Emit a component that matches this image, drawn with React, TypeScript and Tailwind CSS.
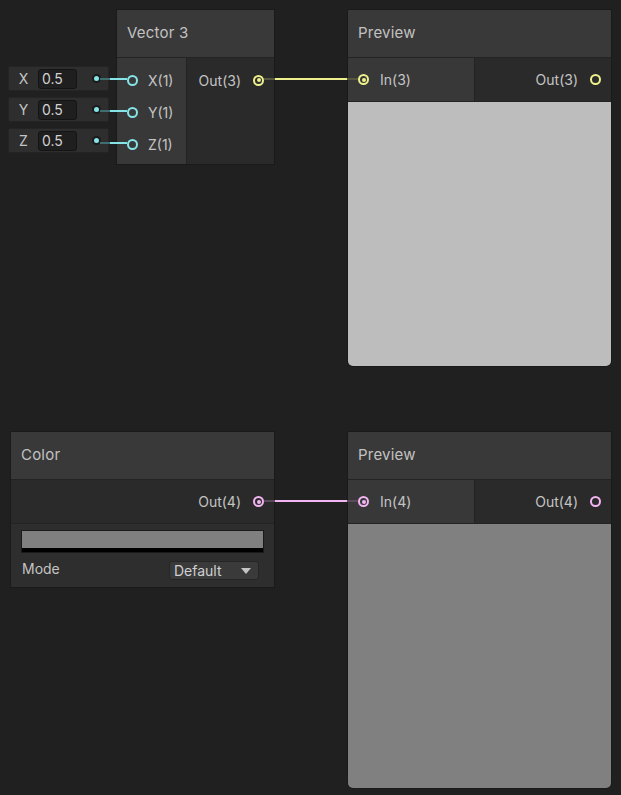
import React from 'react';

// ─── Ports ─────────────────────────────────────────────────
type PortProps = { color: string; connected?: boolean };

function Port({ color, connected }: PortProps) {
  return (
    <div
      className="w-[11px] h-[11px] rounded-full border-2 flex items-center justify-center shrink-0"
      style={{ borderColor: color }}
    >
      {connected && <div className="w-[4px] h-[4px] rounded-full" style={{ background: color }} />}
    </div>
  );
}

const YELLOW = '#edf08c';
const CYAN = '#84e4e7';
const PINK = '#f2b4f2';

function Header({ title }: { title: string }) {
  return (
    <div className="h-[48px] flex items-center px-[10px] bg-[#393939] border-b border-[#232323] text-[15px] text-[#c2c2c2] tracking-[0.2px]">
      {title}
    </div>
  );
}

// ─── Inline value field ───────────────────────────────────
function InlineField({ label }: { label: string }) {
  return (
    <div className="h-[25px] w-[101px] flex items-center bg-[#2e2e2e] border border-[#242424] rounded-[2px]">
      <span className="w-[29px] text-center text-[14px] text-[#c4c4c4]">{label}</span>
      <div className="w-[39px] h-[20px] bg-[#1f1f1f] border border-[#141414] rounded-[3px] flex items-center px-[3px] text-[14px] text-[#d2d2d2]">
        0.5
      </div>
      <div className="ml-[15px] w-[9px] h-[9px] rounded-full bg-[#1b1b1b] flex items-center justify-center">
        <div className="w-[5px] h-[5px] rounded-full bg-[#84e4e7]" />
      </div>
    </div>
  );
}

function PreviewNode({ n, swatch }: { n: number; swatch: string }) {
  const color = n === 3 ? YELLOW : PINK;
  return (
    <div className="w-[265px] flex flex-col rounded-b-[6px] rounded-t-[2px] border border-[#1a1a1a] bg-[#2a2a2a] overflow-hidden">
      <Header title="Preview" />
      <div className="h-[44px] flex border-b border-[#232323]">
        <div className="w-[127px] bg-[#383838] flex items-center pl-[10px] gap-[11px] border-r border-[#232323]">
          <Port color={color} connected />
          <span className="text-[14px] text-[#c4c4c4]">In({n})</span>
        </div>
        <div className="flex-1 bg-[#2a2a2a] flex items-center justify-end pr-[10px] gap-[12px]">
          <span className="text-[14px] text-[#c4c4c4]">Out({n})</span>
          <Port color={color} />
        </div>
      </div>
      <div className="h-[264px]" style={{ background: swatch }} />
    </div>
  );
}

export default function App() {
  return (
    <div className="relative w-[621px] h-[795px] bg-[#202020] overflow-hidden font-['Inter','Noto_Sans',sans-serif]">
      {/* Vector 3 inline inputs */}
      <div className="absolute left-[8px] top-[66px] flex flex-col gap-[6px]">
        <InlineField label="X" />
        <InlineField label="Y" />
        <InlineField label="Z" />
      </div>

      {/* Vector 3 node */}
      <div className="absolute left-[116px] top-[9px] w-[159px] flex flex-col border border-[#1a1a1a] bg-[#2a2a2a]">
        <Header title="Vector 3" />
        <div className="flex h-[106px]">
          <div className="w-[70px] bg-[#383838] border-r border-[#232323] pt-[6px] flex flex-col">
            {['X(1)', 'Y(1)', 'Z(1)'].map((l) => (
              <div key={l} className="h-[32px] flex items-center pl-[10px] gap-[10px]">
                <Port color={CYAN} />
                <span className="text-[14px] text-[#c4c4c4]">{l}</span>
              </div>
            ))}
          </div>
          <div className="flex-1 pt-[6px]">
            <div className="h-[32px] flex items-center justify-end pr-[10px] gap-[12px]">
              <span className="text-[14px] text-[#c4c4c4]">Out(3)</span>
              <Port color={YELLOW} connected />
            </div>
          </div>
        </div>
      </div>

      {/* Preview nodes */}
      <div className="absolute left-[347px] top-[9px]">
        <PreviewNode n={3} swatch="#bdbdbd" />
      </div>
      <div className="absolute left-[347px] top-[431px]">
        <PreviewNode n={4} swatch="#808080" />
      </div>

      {/* Color node */}
      <div className="absolute left-[10px] top-[431px] w-[265px] flex flex-col border border-[#1a1a1a] bg-[#2a2a2a]">
        <Header title="Color" />
        <div className="h-[44px] flex items-center justify-end pr-[10px] gap-[12px] border-b border-[#232323]">
          <span className="text-[14px] text-[#c4c4c4]">Out(4)</span>
          <Port color={PINK} connected />
        </div>
        <div className="bg-[#2e2e2e] px-[10px] pt-[6px] pb-[6px] flex flex-col">
          <div className="h-[23px] border border-[#1a1a1a] flex flex-col">
            <div className="flex-1 bg-[#808080]" />
            <div className="h-[4px] bg-black" />
          </div>
          <div className="flex items-center justify-between mt-[7px] h-[21px]">
            <span className="pl-[1px] text-[14px] text-[#c4c4c4] -mt-[4px]">Mode</span>
            <div className="w-[90px] h-[19px] rounded-[3px] bg-[#3a3a3a] border border-[#262626] flex items-center justify-between px-[4px] mr-[5px] text-[14px] text-[#d0d0d0]">
              Default
              <svg width="10" height="6" viewBox="0 0 10 6" className="mr-[3px]">
                <path d="M0 0 L10 0 L5 6 Z" fill="#c4c4c4" />
              </svg>
            </div>
          </div>
        </div>
      </div>

      {/* Edges */}
      <svg className="absolute inset-0 pointer-events-none" width="621" height="795">
        {[79, 111, 143].map((y) => (
          <g key={y}>
            <line x1="100" y1={y} x2="110" y2={y} stroke="#3e6e70" strokeWidth="2" />
            <line x1="110" y1={y} x2="127" y2={y} stroke={CYAN} strokeWidth="2" />
          </g>
        ))}
        <line x1="264" y1="79" x2="275" y2="79" stroke="#55573f" strokeWidth="2" />
        <line x1="275" y1="79" x2="347" y2="79" stroke={YELLOW} strokeWidth="2" />
        <line x1="347" y1="79" x2="358" y2="79" stroke="#55573f" strokeWidth="2" />
        <line x1="264" y1="501" x2="275" y2="501" stroke="#5a4a5a" strokeWidth="2" />
        <line x1="275" y1="501" x2="347" y2="501" stroke={PINK} strokeWidth="2" />
        <line x1="347" y1="501" x2="358" y2="501" stroke="#5a4a5a" strokeWidth="2" />
      </svg>
    </div>
  );
}
